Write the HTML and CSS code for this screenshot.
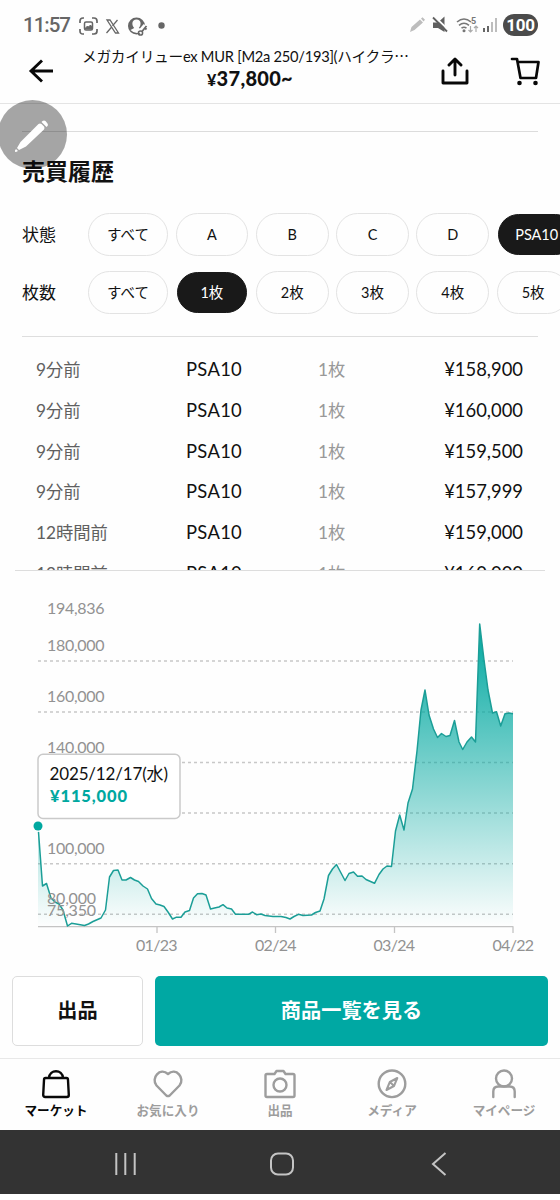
FILE: index.html
```html
<!DOCTYPE html>
<html lang="ja">
<head>
<meta charset="utf-8">
<title>売買履歴</title>
<link rel="stylesheet" href="styles.css">
</head>
<body>
<div class="app">
  <div class="status">
    <span class="clock">11:57</span>
    <svg class="status-left" width="95" height="22" viewBox="0 0 95 22" fill="none" stroke="#666" stroke-width="1.7">
      <path d="M1 8V6Q1 3 4 3H5M13 3h2q3 0 3 3v2M18 14v2q0 3-3 3h-2M5 19H4q-3 0-3-3v-2"/>
      <rect x="5.500" y="7" width="8" height="8" rx="1.500" stroke-width="1.500"/><path d="M6.500 13l2-2 1 1 2-2 1.500 2v2h-6.500z" fill="#666" stroke-width="1"/>
      <path d="M28 5h3l8.500 13h-3zM38.500 5l-5 5.800M27.500 18l5.200-6" stroke-width="1.300"/>
      <circle cx="57.500" cy="11" r="8.500" fill="#666" stroke="none"/>
      <path d="M57.500 4.500c5 0 5 5.500 2.300 8.500l3.200 1.500-2 3q-5 2-9.500-2.500l3.700-2c-2.700-3-2.700-8.500 2.300-8.500z" fill="#fdfdfd" stroke="none"/>
      <path d="M61 18l6-7" stroke="#fdfdfd" stroke-width="6"/>
      <circle cx="61.500" cy="18" r="2.100" stroke-width="1.500"/><path d="M63 16.500l4.500-5.500M65.500 12.500l2 2" stroke-width="1.800"/>
      <circle cx="82.500" cy="10.500" r="3.200" fill="#666" stroke="none"/>
    </svg>
    <svg class="status-right" width="90" height="22" viewBox="0 0 90 22" fill="none">
      <path d="M1 18l1.500-5L11 5.500l3 3L5.500 16z M12 4.500l1.500-1.200 2.500 2.500-1.500 1.700z" fill="#bdbdbd"/>
      <path d="M24 8.500h5l6.500-6V18L29 14h-5z" fill="#606060"/>
      <path d="M25.500 2.500l14 13.500" stroke="#fdfdfd" stroke-width="1.800"/><path d="M24 3.500l14 14" stroke="#606060" stroke-width="1.800"/>
      <path d="M48 8q7-6 14 0M50 11.300q5-4 10 0M52.500 14.200q2.500-2 5 0" stroke="#777" stroke-width="1.600"/><circle cx="55" cy="16.800" r="1.500" fill="#777"/>
      <text x="62" y="10" class="wifi-gen">5</text>
      <path d="M61.500 12v6m-2-2l2 2 2-2M67 18v-6m-2 2l2-2 2 2" stroke="#aaa" stroke-width="1.200"/>
      <path d="M75 14v4M79 12v6" stroke="#666" stroke-width="2"/><path d="M83 8v10M87 4v14" stroke="#bdbdbd" stroke-width="2"/>
    </svg>
    <span class="battery">100</span>
  </div>

  <header class="header">
    <svg class="back" width="26" height="26" viewBox="0 0 26 26" fill="none" stroke="#080808" stroke-width="2.900"><path d="M25 13H3M14 2.500L3 13l11 10.500"/></svg>
    <div class="heading">
      <div class="product">メガカイリューex MUR [M2a 250/193](ハイクラ<span class="dots">…</span></div>
      <div class="price"><span class="yen">¥</span>37,800~</div>
    </div>
    <svg class="share" width="28" height="28" viewBox="0 0 28 28" fill="none" stroke="#080808" stroke-width="2.900" stroke-linecap="round" stroke-linejoin="round"><path d="M2 14v12h24V14M14 18V3M8 8l6-6 6 6"/></svg>
    <svg class="cart" width="30" height="30" viewBox="0 0 30 30" fill="none" stroke="#080808" stroke-width="2.700" stroke-linecap="round" stroke-linejoin="round"><path d="M2 3h5l3.500 19H26L28.500 6H8"/><circle cx="9.500" cy="27" r="2.300" fill="#080808" stroke="none"/><circle cx="25.500" cy="27" r="2.300" fill="#080808" stroke="none"/></svg>
  </header>

  <main class="history">
    <h1 class="title">売買履歴</h1>
    <div class="filter">
      <span class="filter-label">状態</span>
      <span class="pill pill-wide">すべて</span><span class="pill">A</span><span class="pill">B</span><span class="pill">C</span><span class="pill">D</span><span class="pill pill-wide selected">PSA10</span>
    </div>
    <div class="filter">
      <span class="filter-label">枚数</span>
      <span class="pill pill-wide">すべて</span><span class="pill selected">1枚</span><span class="pill">2枚</span><span class="pill">3枚</span><span class="pill">4枚</span><span class="pill">5枚</span>
    </div>
    <div class="trades">
      <div class="trade"><span class="time">9分前</span><span class="grade">PSA10</span><span class="count">1枚</span><span class="amount">¥158,900</span></div>
      <div class="trade"><span class="time">9分前</span><span class="grade">PSA10</span><span class="count">1枚</span><span class="amount">¥160,000</span></div>
      <div class="trade"><span class="time">9分前</span><span class="grade">PSA10</span><span class="count">1枚</span><span class="amount">¥159,500</span></div>
      <div class="trade"><span class="time">9分前</span><span class="grade">PSA10</span><span class="count">1枚</span><span class="amount">¥157,999</span></div>
      <div class="trade"><span class="time">12時間前</span><span class="grade">PSA10</span><span class="count">1枚</span><span class="amount">¥159,000</span></div>
      <div class="trade"><span class="time">12時間前</span><span class="grade">PSA10</span><span class="count">1枚</span><span class="amount">¥160,000</span></div>
    </div>
  </main>

  <svg class="chart" width="560" height="391" viewBox="0 571 560 391">
    <defs><linearGradient id="fill" gradientUnits="userSpaceOnUse" x1="0" y1="624" x2="0" y2="927"><stop offset="0" stop-color="#00a8a0"/><stop offset="1" stop-color="#00a8a0" stop-opacity="0"/></linearGradient></defs>
    <path class="grid" d="M38 661H513M38 712H513M38 762.500H513M38 813H513M38 863.700H513M38 914.300H513"/>
    <path fill="url(#fill)" d="M38 927V826L42.500 886 46.500 883.500 51 898 55 902 59 904 63 910 67.500 926 71.500 923.300 76 924 84.500 925.500 88.500 924 93 921.500 101 918 105.500 910 109.500 877 113.500 870.500 118 870 122 880 126 880 130.500 877.500 134.500 880 138.500 881.500 143 886 147.500 889 151.500 898.500 156 904 160 905 164 906.500 168 912 172.500 919 176 917.300 181 917.300 185 912 189.500 910.500 193.500 898 197.500 893.700 202 893.500 206 895 210.500 909 214.500 908 219 907 223 904.700 227 908 231.500 909 235.500 914.300 248.500 914.300 252.500 912 256.500 914.700 261 914 265 915.500 273 916.500 281 916.500 286 917.500 290 919 294 916.500 298.500 914.300 303 915.500 311.500 915 315.500 912.500 320 911 324 899 328.500 875.500 332.500 869 336.500 864.500 345 880.500 349 873.500 353.500 872 357.500 876.300 362 876 366 879.500 374.500 883.300 379 874.500 383 869 387 866 391.500 866.500 395.500 831 399.700 815 404 830 408 803 412.500 789 417 751 421 710 425 690 429 715 433.500 729 437.500 737.500 441.500 733.500 446 736.500 450 735.500 454.500 720.500 459 742 462.700 749.500 467 742 471.500 737 475.500 742 479.700 624 484 660 488 690 492.500 713 496.500 711.800 500.700 726 505 713.700 509 713 513 713.700V927z"/>
    <path class="axis" d="M38 926.700H513.500M157 927v6M275.500 927v6M394.500 927v6M513 927v6"/>
    <path class="line" d="M38.500 832L42.500 886 46.500 883.500 51 898 55 902 59 904 63 910 67.500 926 71.500 923.300 76 924 84.500 925.500 88.500 924 93 921.500 101 918 105.500 910 109.500 877 113.500 870.500 118 870 122 880 126 880 130.500 877.500 134.500 880 138.500 881.500 143 886 147.500 889 151.500 898.500 156 904 160 905 164 906.500 168 912 172.500 919 176 917.300 181 917.300 185 912 189.500 910.500 193.500 898 197.500 893.700 202 893.500 206 895 210.500 909 214.500 908 219 907 223 904.700 227 908 231.500 909 235.500 914.300 248.500 914.300 252.500 912 256.500 914.700 261 914 265 915.500 273 916.500 281 916.500 286 917.500 290 919 294 916.500 298.500 914.300 303 915.500 311.500 915 315.500 912.500 320 911 324 899 328.500 875.500 332.500 869 336.500 864.500 345 880.500 349 873.500 353.500 872 357.500 876.300 362 876 366 879.500 374.500 883.300 379 874.500 383 869 387 866 391.500 866.500 395.500 831 399.700 815 404 830 408 803 412.500 789 417 751 421 710 425 690 429 715 433.500 729 437.500 737.500 441.500 733.500 446 736.500 450 735.500 454.500 720.500 459 742 462.700 749.500 467 742 471.500 737 475.500 742 479.700 624 484 660 488 690 492.500 713 496.500 711.800 500.700 726 505 713.700 509 713 513 713.700"/>
    <g class="labels">
      <text x="47" y="613.500" textLength="57.500">194,836</text>
      <text x="47" y="651" textLength="57.500">180,000</text>
      <text x="47" y="701.500" textLength="57.500">160,000</text>
      <text x="47" y="752.500" textLength="57.500">140,000</text>
      <text x="47" y="853.500" textLength="57.500">100,000</text>
      <text x="47" y="904" textLength="49">80,000</text>
      <text x="47" y="916" textLength="49">75,350</text>
      <text x="136" y="951" textLength="41.500">01/23</text>
      <text x="255" y="951" textLength="41.500">02/24</text>
      <text x="373.500" y="951" textLength="41.500">03/24</text>
      <text x="492.500" y="951" textLength="41.500">04/22</text>
    </g>
    <rect class="tip" x="38" y="754.200" width="142" height="64.300" rx="5"/>
    <text class="tip-date" x="49.500" y="780" textLength="118.500">2025/12/17(水)</text>
    <text class="tip-price" x="50" y="802" textLength="77">¥115,000</text>
    <circle cx="38" cy="826" r="4.500" fill="#00a8a0"/>
  </svg>

  <div class="actions"><button class="btn sell">出品</button><button class="btn browse">商品一覧を見る</button></div>

  <nav class="tabs">
    <div class="tab current"><svg width="32" height="32" viewBox="0 0 32 32"><path d="M5.500 10h21q1.500 0 1.500 2l.8 15q0 2-2 2H5.200q-2 0-2-2l.8-15Q4 10 5.500 10zM9 10c.5-9 13.500-9 14 0"/></svg><span>マーケット</span></div>
    <div class="tab"><svg width="32" height="32" viewBox="0 0 32 32"><path d="M14.300 27.500L4.500 17.500C-1.500 10 8-1 16 6 24-1 33.500 10 27.500 17.500L17.700 27.500q-1.700 1.200-3.400 0z"/></svg><span>お気に入り</span></div>
    <div class="tab"><svg width="32" height="32" viewBox="0 0 32 32"><path d="M3 6h7.500l2-3h7l2 3H29q1.500 0 1.500 1.500v20Q30.500 29 29 29H3q-1.500 0-1.500-1.500v-20Q1.500 6 3 6z"/><circle cx="16" cy="17" r="6.500"/></svg><span>出品</span></div>
    <div class="tab"><svg width="32" height="32" viewBox="0 0 32 32"><circle cx="16" cy="15.800" r="13.300"/><path stroke-width="2" d="M21.300 10l-3.300 8-7.500 4 3.300-8zM14.500 14.500l3 3"/></svg><span>メディア</span></div>
    <div class="tab"><svg width="32" height="32" viewBox="0 0 32 32"><circle cx="16" cy="10.500" r="8"/><path d="M5.300 29v-5.500q0-5 5-5h11.400q5 0 5 5V29"/></svg><span>マイページ</span></div>
  </nav>

  <div class="system">
    <svg width="560" height="64" viewBox="0 0 560 64" fill="none" stroke="#c4c4c4" stroke-width="2"><path d="M116.300 23v22M125.300 23v22M134.700 23v22M445.500 23L433 34l12.500 11"/><rect x="271" y="23.500" width="22" height="21" rx="7"/></svg>
  </div>
  <div class="pen"><svg width="69" height="69" viewBox="0 0 69 69" fill="#fff"><path d="M22.500 42L40.500 24q1.500-1 3 0l2.500 2.500q1 1.500 0 3L28 46.500l-7 3.500-2-2zM43.500 22l1-1q1.500-1 3 0l2 2.500q1 1.500 0 2.500l-1 1zM18 49l2 2-2 1q-1.500 0-1-1.500z"/></svg></div>
</div>
</body>
</html>
```
FILE: styles.css
```css
* { box-sizing: border-box; }
body { margin: 0; background: #fefefe; color: #111; font-family: Lato, "Noto Sans CJK JP", sans-serif; }
.app { position: relative; width: 560px; height: 1200px; overflow: hidden; }

.status { display: flex; align-items: center; height: 49px; padding: 0 22px 0 23px; }
.clock { width: 48px; font: 500 20.500px Roboto, sans-serif; letter-spacing: -1px; color: #666; }
.status-left { margin-left: 8px; margin-top: 2px; }
.status-right { margin-left: auto; margin-right: 4px; }
.wifi-gen { font: bold 9px Roboto, sans-serif; fill: #777; }
.battery { width: 35px; height: 22px; border-radius: 11px; background: #4b4b4b; color: #fff; font: bold 17px/22px Roboto, sans-serif; letter-spacing: -0.3px; text-align: center; }

.header { display: flex; height: 55px; border-bottom: 1px solid #e4e4e4; padding-left: 28px; }
.back { margin-top: 9px; }
.heading { width: 328px; margin-left: 28px; text-align: center; white-space: nowrap; }
.product { height: 18px; font-size: 14.700px; line-height: 14px; letter-spacing: -0.270px; text-align: left; }
.dots { font-family: "Noto Sans CJK JP", sans-serif; }
.price { padding-left: 8px; font-size: 20px; font-weight: 900; line-height: 23px; letter-spacing: 0.300px; }
.yen { font-size: 16px; }
.share { margin: 8px 0 0 31px; }
.cart { margin: 7px 0 0 41px; }

.history { height: 467px; padding-top: 27px; }
.title { height: 82px; margin: 0 22px; border-top: 1px solid #dcdcdc; font-size: 23px; line-height: 78px; font-weight: 700; color: #111; }
.filter { display: flex; height: 43px; margin-bottom: 15px; padding-left: 22px; gap: 7.500px; white-space: nowrap; line-height: 43px; }
.filter-label { width: 58.500px; flex: none; font-size: 17px; }
.pill { flex: none; width: 72.800px; border: 1.500px solid #e3e3e3; border-radius: 22px; text-align: center; font-size: 14.500px; line-height: 41px; }
.pill-wide { width: 80px; }
.selected { margin: 1px; width: 70.800px; border-color: #191919; background: #191919; color: #fff; line-height: 39px; }
.pill-wide.selected { width: 78px; }
.trades { height: 234.500px; margin: 22px 15px 0; overflow: hidden; border-bottom: 1.500px solid #ddd; }
.trades::before { content: ""; display: block; height: 13px; margin: 0 7px; border-top: 1.500px solid #dedede; }
.trade { display: grid; grid-template-columns: 150px 132px 74px 1fr; height: 40.750px; padding: 0 22px 0 21px; font-size: 18.400px; line-height: 39px; white-space: nowrap; }
.time { color: #606060; font-size: 17.300px; }
.grade { letter-spacing: 0.300px; }
.count { color: #999; font-size: 17.300px; }
.amount { text-align: right; }

.chart { display: block; }
.grid { stroke: #c8c8c8; stroke-width: 1.500; stroke-dasharray: 3 3; fill: none; }
.axis { stroke: #c4c4c4; stroke-width: 1.300; fill: none; }
.line { stroke: #1b9e97; stroke-width: 1.500; fill: none; stroke-linejoin: round; }
.labels { font-size: 16px; fill: #929292; }
.tip { fill: #fff; stroke: #cacaca; stroke-width: 1.500; }
.tip-date { font-size: 17px; fill: #111; }
.tip-price { font-size: 16.500px; font-weight: 900; fill: #00a8a0; }

.actions { display: flex; gap: 12px; height: 96px; padding: 14px 12px 12px; }
.btn { border: 0; border-radius: 5px; padding: 0 0 3px; font: bold 20.200px "Noto Sans CJK JP", sans-serif; }
.sell { width: 131px; border: 1.500px solid #ddd; background: #fff; color: #111; }
.browse { flex: 1; background: #00a8a3; color: #fff; }

.tabs { display: flex; height: 72px; border-top: 1.500px solid #e8e8e8; }
.tab { display: flex; flex: 1; flex-direction: column; align-items: center; padding-top: 9px; color: #9d9d9d; font-size: 12.600px; line-height: 18px; font-weight: 700; }
.tab svg { margin-bottom: 2px; fill: none; stroke: currentColor; stroke-width: 2.400; stroke-linejoin: round; stroke-linecap: round; }
.current { color: #080808; }
.system { height: 64px; background: #333; }
.pen { position: absolute; left: -2.500px; top: 100px; width: 69px; height: 69px; border-radius: 50%; background: rgba(0,0,0,.35); }
```
